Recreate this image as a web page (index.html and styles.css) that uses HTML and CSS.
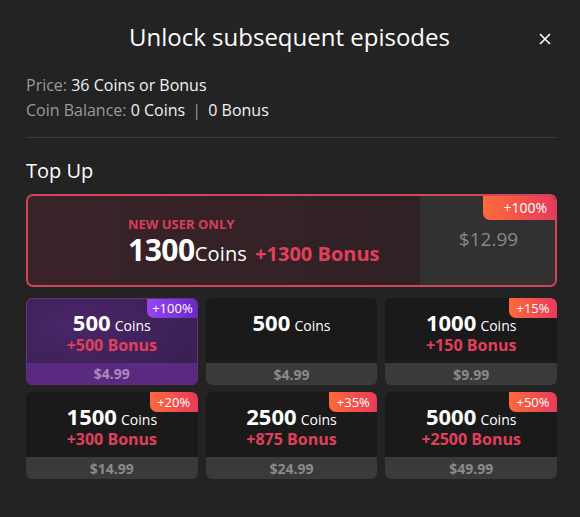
FILE: index.html
```html
<!DOCTYPE html>
<html>
<head>
<meta charset="utf-8">
<link rel="stylesheet" href="styles.css">
</head>
<body>
<div class="modal">
  <div class="header">
    <h1 class="title">Unlock subsequent episodes</h1>
    <span class="close">
      <svg width="12" height="12" viewBox="0 0 12 12"><path d="M1 1L11 11M11 1L1 11" stroke="#fff" stroke-width="1.6" fill="none"/></svg>
    </span>
  </div>
  <div class="info">
    <div class="line"><span class="lbl">Price:</span> 36 Coins or Bonus</div>
    <div class="line"><span class="lbl">Coin Balance:</span> 0 Coins <span class="sep">|</span> 0 Bonus</div>
  </div>
  <div class="divider"></div>
  <h2 class="topup">Top Up</h2>
  <div class="big">
    <div class="big-main">
      <div class="new">NEW USER ONLY</div>
      <div class="big-amt"><span class="big-num">1300</span><span class="big-coins">Coins</span><span class="big-bonus">+1300 Bonus</span></div>
    </div>
    <div class="big-price">$12.99</div>
    <span class="badge bigbadge">+100%</span>
  </div>
  <div class="grid">
    <div class="card purple">
      <div class="body"><div class="amt"><span class="num">500</span> <span class="coins">Coins</span></div><div class="bonus">+500 Bonus</div></div>
      <div class="price">$4.99</div>
      <span class="badge pbadge">+100%</span>
    </div>
    <div class="card">
      <div class="body"><div class="amt"><span class="num">500</span> <span class="coins">Coins</span></div></div>
      <div class="price">$4.99</div>
    </div>
    <div class="card">
      <div class="body"><div class="amt"><span class="num">1000</span> <span class="coins">Coins</span></div><div class="bonus">+150 Bonus</div></div>
      <div class="price">$9.99</div>
      <span class="badge">+15%</span>
    </div>
    <div class="card">
      <div class="body"><div class="amt"><span class="num">1500</span> <span class="coins">Coins</span></div><div class="bonus">+300 Bonus</div></div>
      <div class="price">$14.99</div>
      <span class="badge">+20%</span>
    </div>
    <div class="card">
      <div class="body"><div class="amt"><span class="num">2500</span> <span class="coins">Coins</span></div><div class="bonus">+875 Bonus</div></div>
      <div class="price">$24.99</div>
      <span class="badge">+35%</span>
    </div>
    <div class="card">
      <div class="body"><div class="amt"><span class="num">5000</span> <span class="coins">Coins</span></div><div class="bonus">+2500 Bonus</div></div>
      <div class="price">$49.99</div>
      <span class="badge">+50%</span>
    </div>
  </div>
</div>
</body>
</html>
```
FILE: styles.css
```css
* { box-sizing: border-box; }
html, body { margin: 0; padding: 0; }
body {
  background: #232323;
  font-family: "Open Sans", "Noto Sans", sans-serif;
  color: #fff;
  width: 580px;
  height: 517px;
  overflow: hidden;
}
.modal { padding: 0 23px 0 26px; }
.header {
  position: relative;
  height: 73px;
  display: flex;
  align-items: center;
  justify-content: center;
}
.title {
  margin: 0;
  font-size: 24px;
  font-weight: 400;
  margin-right: 4px;
}
.close {
  position: absolute;
  right: 6px;
  top: 33px;
  width: 12px;
  height: 12px;
  display: flex;
}
.line { font-size: 16px; line-height: 25px; color: #f2f2f2; }
.lbl { color: #9a9a9a; }
.sep { color: #9a9a9a; margin: 0 3px; }
.divider { height: 1px; background: #3a3a3a; margin-top: 14px; }
.topup {
  margin: 0;
  font-size: 20px;
  font-weight: 400;
  line-height: 28px;
  padding-top: 19px;
  padding-bottom: 9px;
}
.big {
  position: relative;
  height: 93px;
  border: 2px solid #d2435e;
  border-radius: 7px;
  display: flex;
  overflow: hidden;
  background: linear-gradient(90deg, #3a2328 0%, #2b2023 100%);
}
.big-main {
  flex: 1;
  padding-left: 100px;
  display: flex;
  flex-direction: column;
  justify-content: center;
  padding-top: 4px;
}
.new { color: #db3d5a; font-size: 13px; font-weight: 700; line-height: 16px; }
.big-amt { display: flex; align-items: baseline; line-height: 30px; margin-top: 3px; }
.big-num { font-size: 30px; font-weight: 700; letter-spacing: -0.5px; }
.big-coins { font-size: 20px; letter-spacing: 0.2px; }
.big-bonus { font-size: 20px; font-weight: 700; color: #e0405c; margin-left: 8px; }
.big-price {
  width: 135px;
  background: #313131;
  color: #888;
  font-size: 19px;
  display: flex;
  align-items: center;
  justify-content: center;
  padding-bottom: 3px;
  padding-left: 2px;
}
.badge {
  position: absolute;
  top: 0;
  right: 0;
  background: linear-gradient(90deg, #ff6a3a, #e83a5a);
  color: #fff;
  font-size: 13px;
  line-height: 20px;
  min-width: 48px;
  text-align: center;
  padding: 0 5px;
  border-radius: 0 6px 0 7px;
}
.bigbadge {
  top: -1px;
  right: -1px;
  font-size: 14px;
  line-height: 25px;
  padding: 0 9px 0 20px;
}
.grid {
  display: grid;
  grid-template-columns: repeat(3, 1fr);
  column-gap: 8px;
  row-gap: 7px;
  margin-top: 11px;
}
.card {
  position: relative;
  height: 87px;
  background: #1a1a1a;
  border-radius: 6px;
  display: flex;
  flex-direction: column;
  overflow: hidden;
}
.body {
  flex: 1;
  display: flex;
  flex-direction: column;
  align-items: center;
  padding-top: 14px;
}
.amt { line-height: 20px; }
.num { font-size: 22px; font-weight: 700; }
.coins { font-size: 14px; }
.bonus { color: #e0405c; font-size: 16px; font-weight: 700; line-height: 18px; }
.price {
  height: 22px;
  background: #3a3a3a;
  color: #8a8a8a;
  font-size: 14px;
  font-weight: 700;
  display: flex;
  align-items: center;
  justify-content: center;
}
.purple {
  background: radial-gradient(ellipse at 30% 30%, #4a2567 0%, #3a2154 70%);
  border: 1px solid #6a2f80;
}
.purple .body { padding-top: 13px; }
.purple .price { background: #5a2a80; color: #a98abf; height: 21px; }
.purple .badge { top: -1px; right: -1px; }
.pbadge { background: linear-gradient(90deg, #9a45f0, #6a28c8); }
```
